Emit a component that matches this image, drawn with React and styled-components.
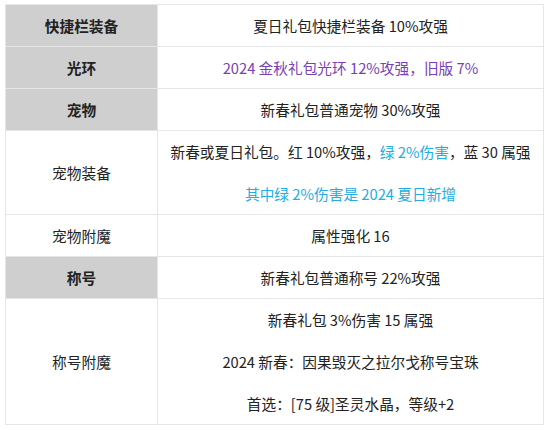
import React from "react";
import styled, { createGlobalStyle } from "styled-components";

const Global = createGlobalStyle`
  html, body { margin: 0; padding: 0; background: #fff; }
  body {
    font-family: "Microsoft YaHei", "Noto Sans CJK SC", "Noto Sans", sans-serif;
    color: #222;
  }
`;

const Wrap = styled.div`
  padding: 4px 5px 0 5px;
`;

const Table = styled.table`
  width: 539px;
  border-collapse: collapse;
  table-layout: fixed;
  font-size: 14.7px;
`;

const Row = styled.tr``;

const Head = styled.td`
  width: 151px;
  border: 1px solid #e6e6e6;
  background: ${(p) => (p.$gray ? "#cfcfcf" : "#fff")};
  font-weight: ${(p) => (p.$gray ? 700 : 400)};
  text-align: center;
  vertical-align: middle;
  padding: 0;
`;

const Cell = styled.td`
  border: 1px solid #e6e6e6;
  text-align: center;
  vertical-align: middle;
  padding: 0;
`;

const Line = styled.div`
  line-height: 23px;
  padding: 9px 0;
  color: ${(p) => p.$color || "#222"};
  & + & { margin-top: 1px; }
`;

const Span = styled.span`
  color: ${(p) => p.$color};
`;

const PURPLE = "#7a3fb4";
const BLUE = "#22ade4";

export default function App() {
  return (
    <>
      <Global />
      <Wrap>
        <Table>
          <tbody>
            <Row>
              <Head $gray>快捷栏装备</Head>
              <Cell><Line>夏日礼包快捷栏装备 10%攻强</Line></Cell>
            </Row>
            <Row>
              <Head $gray>光环</Head>
              <Cell><Line $color={PURPLE}>2024 金秋礼包光环 12%攻强，旧版 7%</Line></Cell>
            </Row>
            <Row>
              <Head $gray>宠物</Head>
              <Cell><Line>新春礼包普通宠物 30%攻强</Line></Cell>
            </Row>
            <Row>
              <Head>宠物装备</Head>
              <Cell>
                <Line>
                  新春或夏日礼包。红 10%攻强，<Span $color={BLUE}>绿 2%伤害</Span>，蓝 30 属强
                </Line>
                <Line $color={BLUE}>其中绿 2%伤害是 2024 夏日新增</Line>
              </Cell>
            </Row>
            <Row>
              <Head>宠物附魔</Head>
              <Cell><Line>属性强化 16</Line></Cell>
            </Row>
            <Row>
              <Head $gray>称号</Head>
              <Cell><Line>新春礼包普通称号 22%攻强</Line></Cell>
            </Row>
            <Row>
              <Head>称号附魔</Head>
              <Cell>
                <Line>新春礼包 3%伤害 15 属强</Line>
                <Line>2024 新春：因果毁灭之拉尔戈称号宝珠</Line>
                <Line>首选：[75 级]圣灵水晶，等级+2</Line>
              </Cell>
            </Row>
          </tbody>
        </Table>
      </Wrap>
    </>
  );
}
